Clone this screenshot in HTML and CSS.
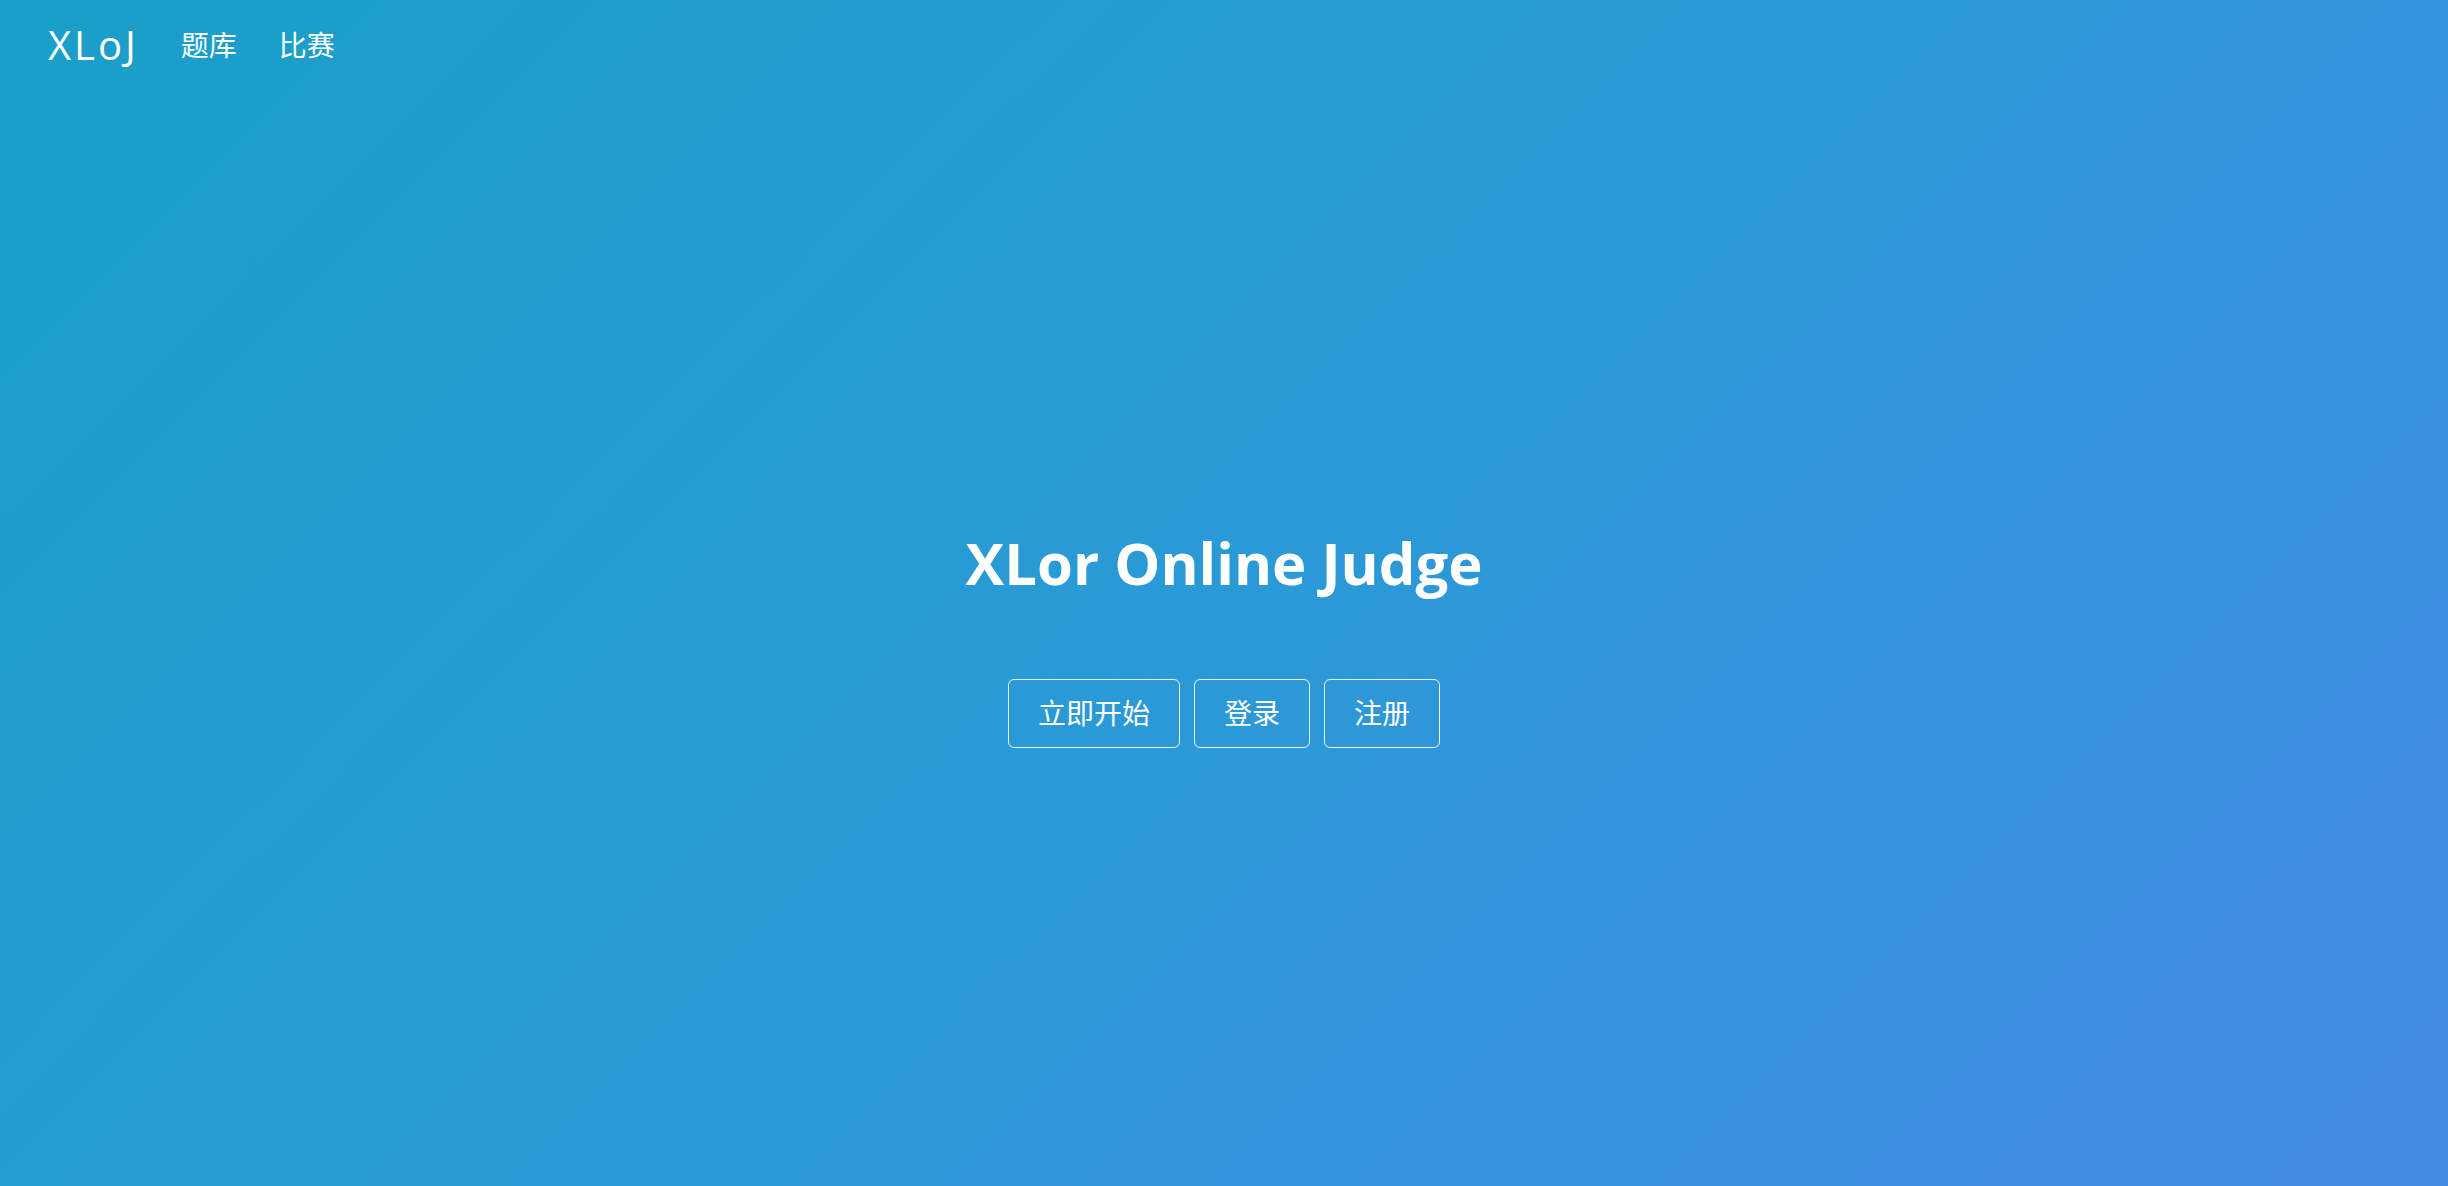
FILE: index.html
```html
<!DOCTYPE html>
<html lang="zh-CN">
<head>
<meta charset="utf-8">
<title>XLor Online Judge</title>
<link rel="stylesheet" href="styles.css">
</head>
<body class="page">
  <header class="navbar">
    <a class="brand" href="#">XLoJ</a>
    <nav class="nav-links">
      <a class="nav-link" href="#">题库</a>
      <a class="nav-link" href="#">比赛</a>
    </nav>
  </header>
  <main class="hero">
    <h1 class="hero-title">XLor Online Judge</h1>
    <div class="hero-actions">
      <a class="btn" href="#">立即开始</a>
      <a class="btn" href="#">登录</a>
      <a class="btn" href="#">注册</a>
    </div>
  </main>
</body>
</html>
```
FILE: styles.css
```css
html, body {
  margin: 0;
  padding: 0;
}
.page {
  height: 100vh;
  display: flex;
  flex-direction: column;
  background: linear-gradient(135deg, #199fc8 0%, #2a9ad6 50%, #4389e4 100%);
  color: #fff;
  font-family: "Open Sans", "Noto Sans CJK SC", sans-serif;
  overflow: hidden;
}
a {
  color: #fff;
  text-decoration: none;
}
.navbar {
  display: flex;
  align-items: center;
  height: 90px;
  padding: 0 48px;
  gap: 42px;
}
.brand {
  font-size: 40px;
  line-height: 1;
  letter-spacing: 3px;
}
.nav-links {
  display: flex;
  gap: 42px;
}
.nav-link {
  font-size: 28px;
  line-height: 1;
}
.hero {
  flex: 1;
  display: flex;
  flex-direction: column;
  align-items: center;
  justify-content: center;
  padding-bottom: 0;
}
.hero-title {
  margin: 0;
  font-size: 58px;
  font-weight: 700;
  line-height: 1.2;
}
.hero-actions {
  display: flex;
  gap: 14px;
  margin-top: 82px;
}
.btn {
  display: block;
  padding: 13px 29px;
  font-size: 28px;
  line-height: 41px;
  border: 1px solid rgba(255, 255, 255, 0.9);
  border-radius: 6px;
}
```
